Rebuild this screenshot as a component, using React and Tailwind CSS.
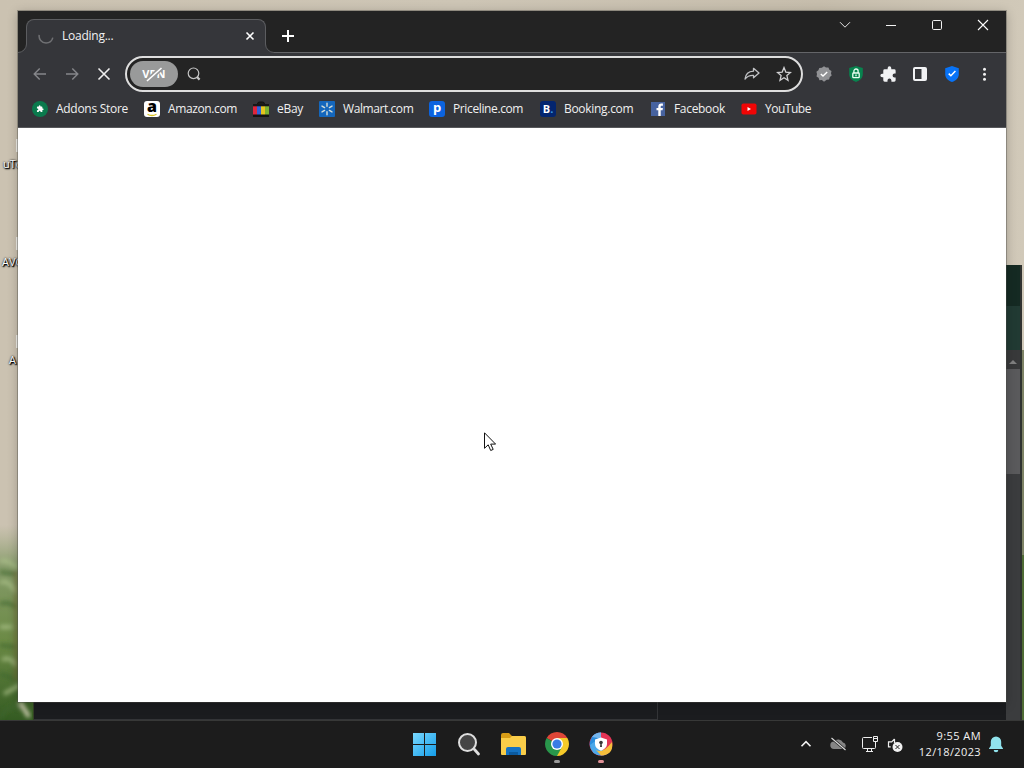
const bookmarks = [
  { label: 'Addons Store', icon: AddonsIcon, width: 'w-[112px]', spacing: 'tracking-[-0.28px]' },
  { label: 'Amazon.com', icon: AmazonIcon, width: 'w-[109px]', spacing: 'tracking-[-0.38px]' },
  { label: 'eBay', icon: EbayIcon, width: 'w-[66px]', spacing: 'tracking-[-0.3px]' },
  { label: 'Walmart.com', icon: WalmartIcon, width: 'w-[110px]', spacing: 'tracking-[-0.42px]' },
  { label: 'Priceline.com', icon: PricelineIcon, width: 'w-[111px]', spacing: 'tracking-[-0.38px]' },
  { label: 'Booking.com', icon: BookingIcon, width: 'w-[110px]', spacing: 'tracking-[-0.3px]' },
  { label: 'Facebook', icon: FacebookIcon, width: 'w-[91px]', spacing: 'tracking-[-0.32px]' },
  { label: 'YouTube', icon: YouTubeIcon, width: 'w-[80px]', spacing: 'tracking-[-0.48px]' },
]

const puzzle = 'M20.5 11H19V7a2 2 0 0 0-2-2h-4V3.5a2.5 2.5 0 0 0-5 0V5H4a2 2 0 0 0-2 2v3.8h1.5a2.7 2.7 0 0 1 0 5.4H2V20a2 2 0 0 0 2 2h3.8v-1.5a2.7 2.7 0 0 1 5.4 0V22H17a2 2 0 0 0 2-2v-4h1.5a2.5 2.5 0 0 0 0-5z'

function AddonsIcon() {
  return (
    <svg className="size-4" viewBox="0 0 16 16">
      <circle cx="8" cy="8" r="8" fill="#0b7a4d" />
      <path d={puzzle} fill="#fff" transform="translate(4.3 4) scale(.32)" />
    </svg>
  )
}

function AmazonIcon() {
  return (
    <span className="relative flex size-4 justify-center rounded-[3px] bg-white">
      <b className="font-['Open_Sans',sans-serif] text-[16px] leading-[10px] font-extrabold text-black">a</b>
      <svg className="absolute bottom-0 left-0 size-4" viewBox="0 0 16 16">
        <path d="M3.5 13.2q4.5 2.6 9 0" stroke="#d8c323" strokeWidth="1.3" fill="none" />
      </svg>
    </span>
  )
}

function EbayIcon() {
  return (
    <svg className="size-4" viewBox="0 0 16 16">
      <path d="M4.5 5V3a2 2 0 0 1 2-2h3a2 2 0 0 1 2 2v2" fill="#1b1b1b" stroke="#111" />
      <path d="M0 4h16v12H0z" fill="#141414" />
      <path d="M0 5h4v8.5H0z" fill="#df263d" />
      <path d="M4 5h4v8.5H4z" fill="#2f62d9" />
      <path d="M8 5h4v8.5H8z" fill="#e5c51f" />
      <path d="M12 5h4v8.5h-4z" fill="#7bb332" />
      <path d="M0 3h16v2.3H0z" fill="#171717" />
    </svg>
  )
}

function WalmartIcon() {
  return (
    <svg className="size-4" viewBox="0 0 16 16">
      <rect width="16" height="16" rx="1" fill="#1467bd" />
      <g stroke="#d4ddd8" strokeWidth="1.4" strokeLinecap="round">
        <path d="M8 2.2v3M8 10.8v3M3 5.1l2.6 1.5M10.4 9.4l2.6 1.5M3 10.9l2.6-1.5M10.4 6.6L13 5.1" />
      </g>
    </svg>
  )
}

function PricelineIcon() {
  return (
    <span className="flex size-4 justify-center rounded-[3px] bg-[#0b63df]">
      <b className="font-['Open_Sans',sans-serif] text-[13px] leading-[13px] text-white">p</b>
    </span>
  )
}

function BookingIcon() {
  return (
    <span className="flex size-4 items-center justify-center rounded-[3px] bg-[#03256f] pb-px font-['Open_Sans',sans-serif] text-[11px] leading-none font-bold">
      <span className="text-white">B</span>
      <span className="text-[#3a9be0]">.</span>
    </span>
  )
}

function FacebookIcon() {
  return (
    <svg className="size-4" viewBox="0 0 16 16">
      <path d="M1 1h14v14H1z" fill="#4763a0" />
      <path d="M8.3 15V9.3H6.5V7h1.8V5.5c0-2 1.2-3 3-3h1.6v2.2h-1.1c-.9 0-1.1.4-1.1 1.1V7h2.2l-.3 2.3h-1.9V15z" fill="#fff" />
    </svg>
  )
}

function YouTubeIcon() {
  return (
    <svg className="size-4" viewBox="0 0 16 16">
      <rect x=".5" y="2.5" width="15" height="11" rx="1.8" fill="#f00505" />
      <path d="M6.5 5.9v4.2L10 8z" fill="#fff" />
    </svg>
  )
}

// Flared corner where the active tab meets the toolbar
function TabFoot({ className }) {
  return (
    <svg className={className} viewBox="0 0 9 9">
      <path d="M0 8.5A8.5 8.5 0 0 0 8.5 0H9V9H0z" fill="#35363a" />
      <path d="M0 8.5A8.5 8.5 0 0 0 8.5 0" fill="none" stroke="#5c5d60" />
    </svg>
  )
}

function TabStrip() {
  return (
    <div className="flex h-[42px] shrink-0 bg-[#232323]">
      <div className="w-2 shrink-0" />
      <div className="relative mt-2 flex h-[34px] w-[240px] shrink-0 items-center rounded-t-lg border-x border-t border-[#5c5d60] bg-[#35363a] pr-[9px] pb-px pl-[11px]">
        <TabFoot className="absolute bottom-0 -left-[9px] size-[9px]" />
        <TabFoot className="absolute -right-[9px] bottom-0 size-[9px] -scale-x-100" />
        <svg className="size-4" viewBox="0 0 16 16" fill="none">
          <path d="M1.2 6.8A7 7 0 0 0 8 15a7 7 0 0 0 6.8-5.4" stroke="#707174" strokeWidth="1.5" />
        </svg>
        <span className="ml-2 flex-1 text-[12px] tracking-[-0.25px] text-[#f1f1f1]">Loading...</span>
        <svg className="size-3" viewBox="0 0 12 12" fill="none">
          <path d="M2.5 2.5l7 7M9.5 2.500l-7 7" stroke="#fff" strokeWidth="1.6" />
        </svg>
      </div>
      <div className="ml-2 flex flex-1 border-b border-[#646568]">
        <svg className="mt-[18px] ml-[7px] size-[14px]" viewBox="0 0 14 14">
          <path d="M7 1v12M1 7h12" stroke="#fff" strokeWidth="2" />
        </svg>
        <div className="mt-[8px] mr-[17px] ml-auto flex h-3 items-center gap-[34px]">
          <svg className="size-3" viewBox="0 0 12 12" fill="none" stroke="#e4e4e4"><path d="M1 3.2l5 5 5-5" /></svg>
          <svg className="size-3" viewBox="0 0 12 12" stroke="#f3f3f3"><path d="M1 6.5h10" /></svg>
          <svg className="size-3" viewBox="0 0 12 12" fill="none" stroke="#f3f3f3"><rect x="1.5" y="1.5" width="9" height="9" rx="1.2" /></svg>
          <svg className="size-3" viewBox="0 0 12 12" stroke="#fff" strokeWidth="1.1"><path d="M1 1l10 10M11 1L1 11" /></svg>
        </div>
      </div>
    </div>
  )
}

function Toolbar() {
  return (
    <div className="flex h-[42px] shrink-0 items-center pl-[14px]">
      <div className="flex w-[93px] shrink-0 gap-4">
        <svg className="size-4" viewBox="0 0 16 16" fill="none" stroke="#85868a" strokeWidth="1.4"><path d="M14 8H2.500M7.700 2.500L2.200 8l5.500 5.500" /></svg>
        <svg className="size-4" viewBox="0 0 16 16" fill="none" stroke="#85868a" strokeWidth="1.4"><path d="M2 8h11.500M8.300 2.500L13.800 8l-5.500 5.500" /></svg>
        <svg className="size-4" viewBox="0 0 16 16" stroke="#eee" strokeWidth="1.6"><path d="M2.500 2.500l11 11M13.500 2.500l-11 11" /></svg>
      </div>
      <div className="flex h-9 w-[678px] shrink-0 items-center rounded-full border-2 border-[#dedede] bg-[#242424] pr-[9px] pl-[3px]">
        <div className="relative flex h-[26px] w-12 items-center justify-center rounded-full bg-[#999a9a] pt-px">
          <b className="text-[11px] tracking-[0.1px] text-white">VPN</b>
          <svg className="absolute top-0 left-0 h-[26px] w-12" viewBox="0 0 48 26">
            <path d="M17 20L31.500 7" stroke="#999a9a" strokeWidth="5" />
            <path d="M17 20L31.500 7" stroke="#fff" strokeWidth="1.600" />
          </svg>
        </div>
        <svg className="ml-[9px] size-[14px]" viewBox="0 0 14 14" fill="none" stroke="#c5c5c5" strokeWidth="1.200">
          <circle cx="6.500" cy="6.300" r="5.300" />
          <path d="M10 10l2.600 2.600" strokeWidth="2.200" />
        </svg>
        <div className="ml-auto flex gap-4">
          <svg className="size-4" viewBox="0 0 16 16" fill="none" stroke="#c1c2c5" strokeWidth="1.300" strokeLinejoin="round">
            <path d="M9.500 2.300L15 7l-5.500 4.800V9.300C5.500 9.100 3 10.400 1 13c.5-4.200 3-7.500 8.500-7.800z" />
          </svg>
          <svg className="size-4" viewBox="0 0 16 16" fill="none" stroke="#d0d0d2" strokeWidth="1.300">
            <path d="M8 1.600l1.800 4.500 4.700.4-3.600 3.100 1.100 4.700L8 11.800l-4 2.500 1.100-4.700-3.600-3.100 4.700-.4z" />
          </svg>
        </div>
      </div>
      <div className="ml-[13px] flex gap-4">
        <svg className="size-4" viewBox="0 0 16 16">
          <path d="M8 .3l2 1.300 2.400-.1 1 2.200 2.100 1.300-.5 2.300.7 2.300-1.900 1.500-.7 2.300-2.400.3L8 15.700l-2.100-1.600-2.500.1-.8-2.400-2.100-1.400.5-2.400L.4 5.700l2-1.500.9-2.300 2.500-.2z" fill="#919295" />
          <path d="M4.800 8l2.200 2.100L11.200 6" fill="none" stroke="#fff" strokeWidth="1.400" />
        </svg>
        <svg className="size-4" viewBox="0 0 16 16">
          <path d="M8 0l6.800 2.100v6.200c0 3.700-2.900 6.200-6.800 7.700-3.900-1.500-6.800-4-6.800-7.700V2.100z" fill="#08834e" />
          <g fill="none" stroke="#eafff4" strokeWidth="1.300">
            <path d="M5.900 7V5.100a2.100 2.100 0 0 1 4.200 0V7" />
            <rect x="4.800" y="7" width="6.400" height="4.700" rx=".8" />
            <path d="M8 8.500v1.800" />
          </g>
        </svg>
        <svg className="size-4 -scale-x-100" viewBox="1.500 .5 22 22"><path d={puzzle} fill="#f1f2f4" /></svg>
        <svg className="size-4" viewBox="0 0 16 16">
          <rect x="2" y="2" width="12" height="12" rx="1" fill="none" stroke="#f1f2f4" strokeWidth="2" />
          <path d="M9.500 2H14v12H9.500z" fill="#f1f2f4" />
        </svg>
        <svg className="size-4" viewBox="0 0 16 16">
          <path d="M8 0l6.800 2.200v6c0 3.700-2.900 6.300-6.800 7.800-3.900-1.500-6.800-4.100-6.800-7.800v-6z" fill="#0873f7" />
          <path d="M4.700 7.600l2.200 2.200 4.500-4.700" fill="none" stroke="#fff" strokeWidth="1.500" />
        </svg>
        <svg className="size-4" viewBox="0 0 16 16" fill="#f1f1f1">
          <circle cx="8.500" cy="3.300" r="1.500" />
          <circle cx="8.500" cy="8.300" r="1.500" />
          <circle cx="8.500" cy="13.300" r="1.500" />
        </svg>
      </div>
    </div>
  )
}

function BrowserWindow() {
  return (
    <div className="absolute top-[11px] left-[18px] flex h-[691px] w-[988px] flex-col bg-[#35363a] shadow-[0_0_0_1px_rgba(75,75,70,0.4),0_2px_10px_rgba(0,0,0,0.25)]">
      <TabStrip />
      <Toolbar />
      <div className="flex h-[33px] shrink-0 items-center border-b border-[#57585b] pb-1 pl-[14px]">
        {bookmarks.map(({ label, icon: Icon, width, spacing }) => (
          <div className={`flex shrink-0 items-center gap-2 ${width}`} key={label}>
            <Icon />
            <span className={`text-[12px] leading-4 whitespace-nowrap text-[#f0f0f0] ${spacing}`}>{label}</span>
          </div>
        ))}
      </div>
      <div className="flex-1 bg-white" />
    </div>
  )
}

// Older window that peeks out along the right and bottom edges
function RearWindow() {
  return (
    <div className="absolute top-[265px] left-[33px] flex h-[455px] w-[989px] border-l border-[#344026] bg-[#1b1c1f]">
      <div className="flex flex-1 flex-col justify-end">
        <div className="h-[18px] w-[624px] border-r border-b border-[#333437]" />
      </div>
      <div className="flex w-4 flex-col border-r-2 border-[#303331] bg-[#3b3c3e]">
        <div className="h-[41px] bg-[#152a23]" />
        <div className="h-[44px] bg-[#213a33]" />
        <div className="flex h-[19px] items-center justify-center bg-[#38393a] pt-1">
          <svg className="h-1 w-2" viewBox="0 0 8 4"><path d="M4 0l4 4H0z" fill="#818181" /></svg>
        </div>
        <div className="h-[105px] bg-[#5a5a5c]" />
      </div>
    </div>
  )
}

function Desktop() {
  return (
    <div className="absolute inset-0 bg-[linear-gradient(90deg,#cbc2b1_0%,#cdc5b5_45%,#c6bdac_80%,#d1c9b9_100%)]">
      <svg className="absolute top-[525px] left-0" width="34" height="195" viewBox="0 0 34 195">
        <defs>
          <linearGradient id="grass" x1="0" y1="0" x2="0" y2="1">
            <stop offset="0" stopColor="#9aa57c" stopOpacity="0" />
            <stop offset=".22" stopColor="#849a68" />
            <stop offset=".6" stopColor="#6b8a45" />
            <stop offset="1" stopColor="#345b22" />
          </linearGradient>
          <filter id="soft"><feGaussianBlur stdDeviation="2.200" /></filter>
        </defs>
        <path d="M0 0h34v195H0z" fill="url(#grass)" />
        <g filter="url(#soft)" fill="none">
          <path d="M0 36q8-2 17 7M0 58q8-5 16 10M0 102h12M2 135q8-5 14 6M4 169l16-9" stroke="#adc38b" strokeWidth="4" opacity=".75" />
          <path d="M0 47l15 2M0 79q9-3 16 4M0 120l16 2M0 149l15 5M0 193q8-15 21-10" stroke="#3f672c" strokeWidth="4" opacity=".7" />
          <path d="M16 45v110" stroke="#756b38" strokeWidth="3" opacity=".7" />
          <path d="M20 177l9 15" stroke="#d0ceb2" strokeWidth="4" />
        </g>
      </svg>
      <svg className="absolute top-[350px] right-0" width="2" height="370" viewBox="0 0 2 370">
        <path d="M0 0h2v370H0z" fill="#7d8265" />
        <path d="M0 205h2v165H0z" fill="#4e6b34" />
      </svg>
      <div className="absolute top-[139px] left-0 flex w-[60px] flex-col text-[11px] leading-4 text-white [text-shadow:1px_1px_2px_#000,0_0_2px_#000,1px_1px_1px_#000]">
        <DesktopLabel text="uTorrent" indent="pl-[3px]" />
        <DesktopLabel text="AVG" indent="pl-[2px]" />
        <DesktopLabel text="A" indent="pl-[9px]" />
      </div>
    </div>
  )
}

function DesktopLabel({ text, indent }) {
  return (
    <div className="h-[98px]">
      <div className="ml-4 h-[13px] w-1 bg-[#f1f0ea]" />
      <div className={`mt-1 ${indent}`}>{text}</div>
    </div>
  )
}

function Taskbar() {
  return (
    <div className="absolute bottom-0 left-0 flex h-12 w-full border-t border-[#373837] bg-[#1c1c1c]">
      <div className="flex pt-[11px] pl-[413px]">
        <svg className="mt-px h-6 w-[23px]" viewBox="0 0 23 24">
          <defs>
            <linearGradient id="win" x1="0" y1="0" x2="1" y2="1">
              <stop stopColor="#79d8ff" />
              <stop offset="1" stopColor="#149de9" />
            </linearGradient>
          </defs>
          <path d="M0 0h11v11H0zM12 0h11v11H12zM0 12h11v11H0zM12 12h11v11H12z" fill="url(#win)" />
        </svg>
        <svg className="mt-px ml-[22px] size-6" viewBox="0 0 24 24" fill="none" stroke="#dedede">
          <path d="M16.500 16.500l4 4.500" strokeWidth="2.800" strokeLinecap="round" />
          <circle cx="9.500" cy="9.500" r="8.500" strokeWidth="2" fill="#454545" />
        </svg>
        <svg className="ml-[19px] h-6 w-[25px]" viewBox="0 0 25 24">
          <path d="M0 3q0-2 2-2h6l3 3h12q2 0 2 2v15H0z" fill="#d79c16" />
          <path d="M0 6h9l2-2h12q2 0 2 2v16q0 1-1 1H1q-1 0-1-1z" fill="#f9cd49" />
          <path d="M5 23v-6q0-2 2-2h11q2 0 2 2v6z" fill="#1472c3" />
          <path d="M8 20h9v3H8z" fill="#0b5a9f" />
        </svg>
        <div className="ml-[19px] flex w-6 flex-col items-center">
          <svg className="size-6 shrink-0" viewBox="0 0 24 24">
            <path d="M12 12L1.608 6A12 12 0 0 1 22.392 6z" fill="#df4638" />
            <path d="M12 12L22.392 6A12 12 0 0 1 12 24z" fill="#f6ca29" />
            <path d="M12 12v12A12 12 0 0 1 1.608 6z" fill="#29964b" />
            <path d="M12 6h10.400L17 15z" fill="#f6ca29" />
            <path d="M17 15l-5 9L7 15z" fill="#29964b" />
            <circle cx="12" cy="12" r="6" fill="#fff" />
            <circle cx="12" cy="12" r="4.600" fill="#3a7ce5" />
          </svg>
          <div className="mt-1 h-[3px] w-[6px] rounded-full bg-[#999]" />
        </div>
        <div className="ml-5 flex w-6 flex-col items-center">
          <svg className="size-6 shrink-0" viewBox="0 0 24 24">
            <circle cx="12" cy="12" r="11.500" fill="#e33456" />
            <path d="M12 .5A11.500 11.500 0 0 0 4 20q-1-10 8-13z" fill="#2a8ddd" />
            <path d="M12 .5Q6 .5 3 5q5 0 9 3z" fill="#75b6ec" />
            <path d="M1 13q1 10 11 10.500 7 0 10-6-14 4-15-9z" fill="#4ba8ea" />
            <path d="M7 18q7 4 16-8 2 13-11 13.500z" fill="#f5be3b" />
            <path d="M12 5.500l6 2V12c0 3-2.400 5.400-6 6.800C8.400 17.400 6 15 6 12V7.500z" fill="#fff" />
            <circle cx="12" cy="10.500" r="1.800" fill="#373737" />
            <path d="M11.400 11h1.200l.4 4h-2z" fill="#373737" />
          </svg>
          <div className="mt-1 h-[3px] w-[6px] rounded-full bg-[#e19197]" />
        </div>
      </div>
      <div className="ml-auto flex pr-[21px]">
        <svg className="mt-[17px] h-3 w-3" viewBox="0 0 12 12" fill="none"><path d="M1.500 8.200L6 3.700l4.500 4.500" stroke="#f2f2f2" strokeWidth="1.600" /></svg>
        <svg className="mt-[15px] ml-[18px] h-4 w-[17px]" viewBox="0 0 17 16">
          <path d="M4 13a3.700 3.700 0 0 1 0-7.400 5.200 5.200 0 0 1 9 1A3.300 3.300 0 0 1 13.500 13z" fill="#858585" />
          <path d="M1.500 2l14 12" stroke="#1c1c1c" strokeWidth="2.400" />
          <path d="M1.500 2l14 12" stroke="#ddd" strokeWidth="1.100" />
        </svg>
        <svg className="mt-[14px] ml-[14px] h-[18px] w-[18px]" viewBox="0 0 18 18" fill="none" stroke="#eee">
          <path d="M11 2.500H2.500q-1 0-1 1v9q0 1 1 1h11q1 0 1-1V9M5 16.500h7M6.500 14v2.500M10.500 14v2.500" />
          <path d="M12.500 1.500h4v5h-4zM14.500 6.500V12M12.500 3.500h4" />
        </svg>
        <svg className="mt-[16px] ml-[8px] h-4 w-4" viewBox="0 0 16 16">
          <path d="M7.500 2L4.700 4.800H1.500v5h2.200M7.500 2v4" fill="none" stroke="#eee" strokeWidth="1.200" />
          <circle cx="10.500" cy="10" r="5" fill="#f1f1f1" />
          <path d="M8.500 8l4 4M12.500 8l-4 4" stroke="#222" />
        </svg>
        <div className="mt-[7px] ml-[13px] flex w-[65px] flex-col items-end text-[11px] leading-4 whitespace-nowrap text-[#f2f2f2]">
          <div className="tracking-[0.42px]">9:55 AM</div>
          <div className="tracking-[0.38px]">12/18/2023</div>
        </div>
        <svg className="mt-[15px] ml-2 h-[17px] w-[14px]" viewBox="0 0 14 17" fill="#91e3ed">
          <path d="M7 .5a5.200 5.200 0 0 0-5.200 5.200v4.100L0 12.400v.6h14v-.6l-1.800-2.600V5.700A5.200 5.200 0 0 0 7 .5zM4.700 14h4.600a2.300 2.300 0 0 1-4.600 0z" />
        </svg>
      </div>
    </div>
  )
}

export default function App() {
  return (
    <div className="relative h-[768px] w-[1024px] overflow-hidden font-['Open_Sans','Noto_Sans',sans-serif]">
      <Desktop />
      <RearWindow />
      <BrowserWindow />
      <Taskbar />
      <svg className="absolute top-[432px] left-[484px] h-5 w-3" viewBox="0 0 12 20">
        <path d="M.5 .8v15.500l3.700-3.500 2.500 5.700 2.500-1.100-2.500-5.300h4.900z" fill="#fff" stroke="#111" />
      </svg>
    </div>
  )
}
